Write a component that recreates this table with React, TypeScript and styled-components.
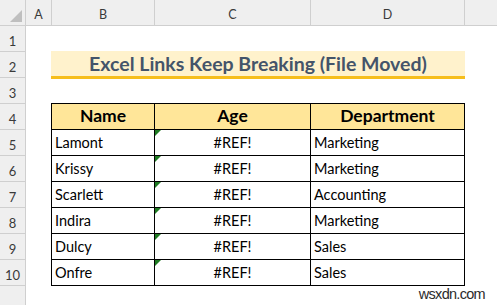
import React from "react";
import styled, { createGlobalStyle } from "styled-components";

const GlobalStyle = createGlobalStyle`
  html, body {
    margin: 0;
    padding: 0;
    background: #ffffff;
  }
  body {
    font-family: Lato, "Open Sans", sans-serif;
    overflow: hidden;
  }
  * { box-sizing: border-box; }
`;

const HEADER_BG = "#efefef";
const HEADER_LINE = "#cfcfcf";

const Sheet = styled.div`
  position: relative;
  width: 497px;
  height: 305px;
  display: flex;
  flex-direction: column;
  overflow: hidden;
`;

const ColumnBar = styled.div`
  display: flex;
  height: 26px;
  flex: none;
  background: ${HEADER_BG};
  border-bottom: 1px solid ${HEADER_LINE};
`;

const Corner = styled.div`
  width: 26px;
  flex: none;
  border-right: 1px solid ${HEADER_LINE};
  display: flex;
  align-items: flex-end;
  justify-content: flex-end;
  padding: 0 3px 3px 0;
`;

const ColHead = styled.div<{ $w?: number }>`
  width: ${(p) => (p.$w ? `${p.$w}px` : "auto")};
  flex: ${(p) => (p.$w ? "none" : "1")};
  border-right: ${(p) => (p.$w ? `1px solid ${HEADER_LINE}` : "none")};
  display: flex;
  align-items: flex-end;
  justify-content: center;
  padding-bottom: 4px;
  font-size: 12.5px;
  line-height: 1;
  color: #3a3a3a;
`;

const Body = styled.div`
  flex: 1;
  display: flex;
`;

const RowBar = styled.div`
  width: 26px;
  flex: none;
  background: ${HEADER_BG};
  border-right: 1px solid ${HEADER_LINE};
  display: flex;
  flex-direction: column;
`;

const RowNum = styled.div`
  height: 26px;
  flex: none;
  border-bottom: 1px solid ${HEADER_LINE};
  display: flex;
  align-items: flex-end;
  justify-content: center;
  padding-bottom: 3px;
  font-size: 13px;
  line-height: 1;
  color: #3a3a3a;
`;

const Canvas = styled.div`
  flex: 1;
  padding: 25px 0 0 25px;
  display: flex;
  flex-direction: column;
  align-items: flex-start;
`;

const Banner = styled.div`
  width: 414px;
  height: 28px;
  background: #fff2cc;
  border-bottom: 3px solid #f6be1c;
  display: flex;
  align-items: flex-end;
  justify-content: center;
  padding-bottom: 3px;
  font-size: 19.5px;
  font-weight: 700;
  line-height: 1;
  color: #44546a;
`;

const Table = styled.div`
  margin-top: 24px;
  display: grid;
  grid-template-columns: 103px 156px 154px;
  grid-auto-rows: 26px;
  border-left: 1px solid #000;
  border-top: 1px solid #000;
`;

const Cell = styled.div<{ $head?: boolean; $align?: "left" | "center"; $flag?: boolean }>`
  position: relative;
  border-right: 1px solid #000;
  border-bottom: 1px solid #000;
  background: ${(p) => (p.$head ? "#ffe699" : "#ffffff")};
  display: flex;
  align-items: flex-end;
  justify-content: ${(p) => (p.$align === "center" ? "center" : "flex-start")};
  padding: 0 3px 5px 3px;
  font-size: ${(p) => (p.$head ? "17.5px" : "14.5px")};
  font-weight: ${(p) => (p.$head ? 700 : 400)};
  line-height: 1;
  color: #000;

  ${(p) =>
    p.$flag
      ? `&::before {
          content: "";
          position: absolute;
          top: 0;
          left: 0;
          width: 0;
          height: 0;
          border-top: 6px solid #1e7b22;
          border-right: 6px solid transparent;
        }`
      : ""}
`;

const Watermark = styled.div`
  position: absolute;
  right: 12px;
  bottom: 4px;
  font-family: "Liberation Sans", Arial, sans-serif;
  font-size: 14.5px;
  letter-spacing: -0.7px;
  line-height: 1;
  color: #2b2b2b;
`;

const CornerMark = () => (
  <svg width="12" height="12" viewBox="0 0 12 12">
    <polygon points="12,0 12,12 0,12" fill="#bfbfbf" />
  </svg>
);

const columns = [
  { label: "A", w: 26 },
  { label: "B", w: 103 },
  { label: "C", w: 156 },
  { label: "D", w: 154 },
];

const rows = [
  { name: "Lamont", dept: "Marketing" },
  { name: "Krissy", dept: "Marketing" },
  { name: "Scarlett", dept: "Accounting" },
  { name: "Indira", dept: "Marketing" },
  { name: "Dulcy", dept: "Sales" },
  { name: "Onfre", dept: "Sales" },
];

export default function App() {
  return (
    <>
      <GlobalStyle />
      <Sheet>
        <ColumnBar>
          <Corner>
            <CornerMark />
          </Corner>
          {columns.map((c) => (
            <ColHead key={c.label} $w={c.w}>
              {c.label}
            </ColHead>
          ))}
          <ColHead />
        </ColumnBar>
        <Body>
          <RowBar>
            {Array.from({ length: 10 }, (_, i) => (
              <RowNum key={i}>{i + 1}</RowNum>
            ))}
          </RowBar>
          <Canvas>
            <Banner>Excel Links Keep Breaking (File Moved)</Banner>
            <Table>
              <Cell $head $align="center">Name</Cell>
              <Cell $head $align="center">Age</Cell>
              <Cell $head $align="center">Department</Cell>
              {rows.map((r) => (
                <React.Fragment key={r.name}>
                  <Cell>{r.name}</Cell>
                  <Cell $align="center" $flag>
                    #REF!
                  </Cell>
                  <Cell>{r.dept}</Cell>
                </React.Fragment>
              ))}
            </Table>
          </Canvas>
        </Body>
        <Watermark>wsxdn.com</Watermark>
      </Sheet>
    </>
  );
}
